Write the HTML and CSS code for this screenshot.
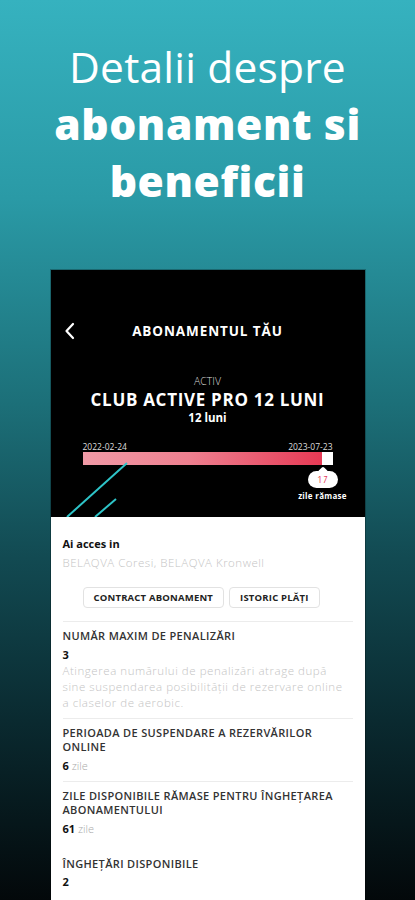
FILE: index.html
```html
<!DOCTYPE html>
<html lang="ro">
<head>
<meta charset="utf-8">
<title>Abonamentul tău</title>
<link rel="stylesheet" href="styles.css">
</head>
<body>
<div class="page">
  <h1 class="headline">
    <span class="hl-light">Detalii despre</span>
    <span class="hl-bold">abonament si</span>
    <span class="hl-bold">beneficii</span>
  </h1>

  <div class="phone">
    <div class="hero">
      <svg class="hero-lines" width="120" height="70" viewBox="0 0 120 70">
        <line x1="76" y1="16" x2="16" y2="70" stroke="#2ec4c8" stroke-width="2"/>
        <line x1="65" y1="52" x2="44" y2="70" stroke="#2ec4c8" stroke-width="2"/>
      </svg>
      <div class="nav">
        <svg class="back" width="12" height="18" viewBox="0 0 12 18">
          <path d="M9 2 L2.5 9 L9 16" fill="none" stroke="#fff" stroke-width="2.2" stroke-linecap="round" stroke-linejoin="round"/>
        </svg>
        <div class="nav-title">ABONAMENTUL TĂU</div>
      </div>
      <div class="status">ACTIV</div>
      <div class="plan">CLUB ACTIVE PRO 12 LUNI</div>
      <div class="duration">12 luni</div>
      <div class="dates">
        <span>2022-02-24</span>
        <span>2023-07-23</span>
      </div>
      <div class="bar">
        <div class="bar-fill"></div>
      </div>
      <div class="remaining">
        <div class="remaining-box">
          <div class="bubble">17</div>
          <div class="remaining-label">zile rămase</div>
        </div>
      </div>
    </div>

    <div class="details">
      <div class="access-title">Ai acces in</div>
      <div class="access-list">BELAQVA Coresi, BELAQVA Kronwell</div>
      <div class="buttons">
        <div class="btn">CONTRACT ABONAMENT</div>
        <div class="btn">ISTORIC PLĂȚI</div>
      </div>

      <div class="item">
        <div class="item-label">NUMĂR MAXIM DE PENALIZĂRI</div>
        <div class="item-value">3</div>
        <div class="item-note">Atingerea numărului de penalizări atrage după sine suspendarea posibilității de rezervare online a claselor de aerobic.</div>
      </div>
      <div class="item">
        <div class="item-label">PERIOADA DE SUSPENDARE A REZERVĂRILOR ONLINE</div>
        <div class="item-value">6 <span class="unit">zile</span></div>
      </div>
      <div class="item">
        <div class="item-label">ZILE DISPONIBILE RĂMASE PENTRU ÎNGHEȚAREA ABONAMENTULUI</div>
        <div class="item-value">61 <span class="unit">zile</span></div>
      </div>
      <div class="item item-plain">
        <div class="item-label">ÎNGHEȚĂRI DISPONIBILE</div>
        <div class="item-value">2</div>
      </div>
    </div>
  </div>
</div>
</body>
</html>
```

FILE: styles.css
```css
* { box-sizing: border-box; }

html, body {
  margin: 0;
  padding: 0;
  height: 900px;
  overflow: hidden;
}

body {
  background: linear-gradient(180deg, #36b2bf 0%, #2a9aa6 22%, #1c6f78 45%, #124a52 62%, #0a2a30 80%, #03080a 100%);
  font-family: "Open Sans", "Noto Sans", sans-serif;
}

.page {
  width: 415px;
  height: 900px;
  display: flex;
  flex-direction: column;
  align-items: center;
}

.headline {
  margin: 38px 0 0;
  display: flex;
  flex-direction: column;
  align-items: center;
  color: #fff;
  font-size: 42.5px;
  line-height: 57px;
  font-weight: 400;
  letter-spacing: 0.2px;
}

.hl-light { font-weight: 400; }
.hl-bold { font-weight: 800; letter-spacing: 0.6px; }

.phone {
  margin-top: 61px;
  width: 314px;
  flex: 1;
  background: #fff;
  display: flex;
  flex-direction: column;
  overflow: hidden;
  box-shadow: 0 0 0 1px rgba(0,0,0,0.25);
}

.hero {
  position: relative;
  height: 247px;
  background: #000;
  color: #fff;
  display: flex;
  flex-direction: column;
  align-items: center;
  overflow: hidden;
}

.hero-lines {
  position: absolute;
  left: 0;
  bottom: 0;
}

.nav {
  position: relative;
  margin-top: 41px;
  width: 100%;
  height: 40px;
  display: flex;
  align-items: center;
  justify-content: center;
}

.back {
  position: absolute;
  left: 13px;
  top: 11px;
}

.nav-title {
  font-size: 13.5px;
  font-weight: 700;
  letter-spacing: 0.9px;
}

.status {
  margin-top: 23px;
  font-size: 10.5px;
  line-height: 14px;
  font-weight: 300;
  color: #ddd;
}

.plan {
  margin-top: 2px;
  font-size: 17px;
  line-height: 20px;
  font-weight: 700;
  letter-spacing: 0.7px;
}

.duration {
  margin-top: 1px;
  font-size: 11.5px;
  line-height: 14px;
  font-weight: 700;
}

.dates {
  margin-top: 17px;
  width: 250px;
  display: flex;
  justify-content: space-between;
  font-size: 8.5px;
  line-height: 10px;
  color: #ddd;
}

.bar {
  width: 250px;
  height: 13px;
  background: #fff;
}

.bar-fill {
  width: 239px;
  height: 100%;
  background: linear-gradient(90deg, #f09aa6 0%, #ee7f8f 45%, #e63a55 100%);
}

.remaining {
  width: 100%;
  display: flex;
  justify-content: flex-end;
  padding-right: 15px;
  margin-top: 6px;
}

.remaining-box {
  width: 54px;
  display: flex;
  flex-direction: column;
  align-items: center;
}

.bubble {
  position: relative;
  width: 30px;
  height: 17px;
  border-radius: 9px;
  background: #fff;
  color: #e63a55;
  font-size: 9px;
  line-height: 17px;
  text-align: center;
}

.bubble::before {
  content: "";
  position: absolute;
  left: 11px;
  top: -3px;
  width: 8px;
  height: 8px;
  background: #fff;
  border-radius: 2px;
  transform: rotate(45deg);
}

.remaining-label {
  margin-top: 3px;
  font-size: 8px;
  line-height: 10px;
  font-weight: 700;
  color: #fff;
  letter-spacing: 0.3px;
}

.details {
  flex: 1;
  padding: 19px 12px 0 12px;
  color: #222;
}

.access-title {
  font-size: 11px;
  line-height: 16px;
  font-weight: 700;
  color: #111;
}

.access-list {
  margin-top: 3px;
  font-size: 11.5px;
  line-height: 16px;
  font-weight: 300;
  color: #c4c4c4;
  letter-spacing: 0.5px;
}

.buttons {
  margin-top: 16px;
  margin-left: 20px;
  display: flex;
  gap: 5px;
}

.btn {
  height: 21px;
  padding: 0 10px;
  border: 1px solid #e2e2e2;
  border-radius: 4px;
  font-size: 9.5px;
  line-height: 19px;
  font-weight: 700;
  color: #222;
  letter-spacing: 0.2px;
}

.item {
  border-top: 1px solid #ececec;
  margin-top: 13px;
  padding-top: 7px;
}

.item + .item { margin-top: 7px; }

.item-plain {
  border-top: none;
}

.item + .item-plain { margin-top: 13px; }

.item-label {
  font-size: 11px;
  line-height: 14.5px;
  font-weight: 600;
  color: #333;
  letter-spacing: 0.35px;
}

.item-value {
  margin-top: 3px;
  font-size: 11px;
  line-height: 16px;
  font-weight: 700;
  color: #111;
}

.unit {
  font-weight: 300;
  color: #aaa;
}

.item-note {
  margin-top: 0;
  padding-right: 10px;
  font-size: 11.5px;
  line-height: 16px;
  font-weight: 300;
  color: #c4c4c4;
  letter-spacing: 0.55px;
}
```
